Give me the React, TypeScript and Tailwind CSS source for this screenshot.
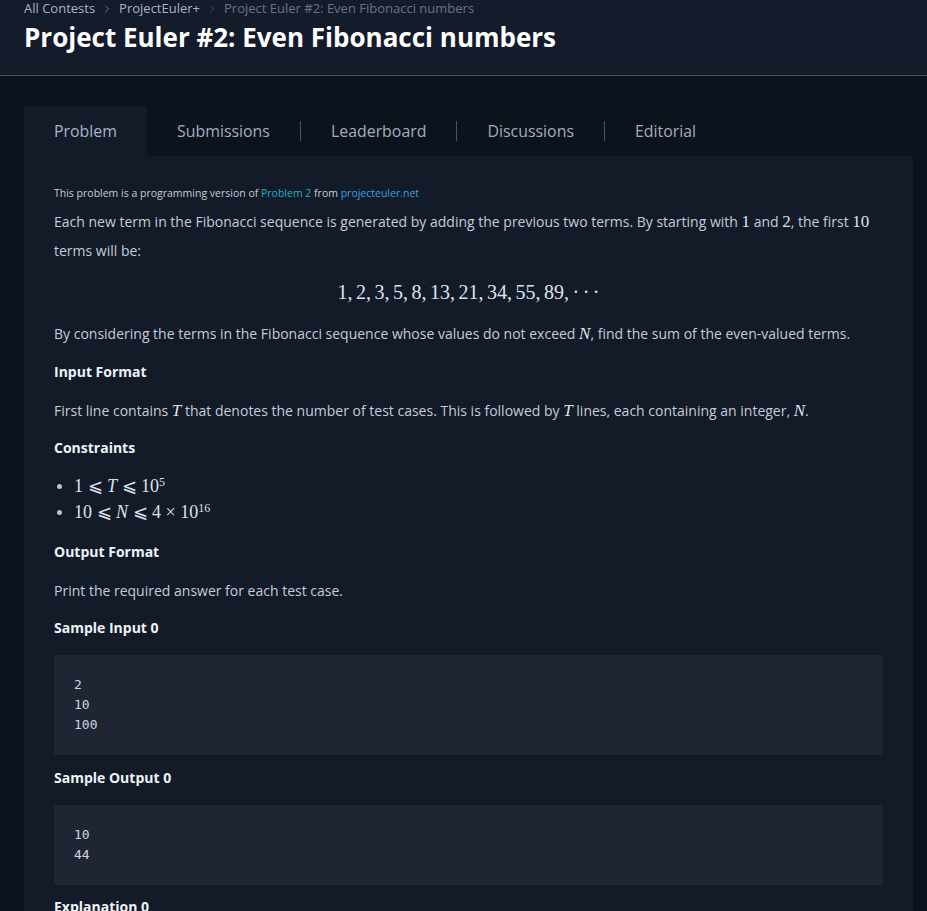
import React from "react";
import { ChevronRight } from "lucide-react";

const M = ({ children }: { children: React.ReactNode }) => (
  <span className="font-['Liberation_Serif',serif] text-[17px] text-[#dde3ec]">{children}</span>
);
const V = ({ children }: { children: React.ReactNode }) => (
  <span className="font-['Liberation_Serif',serif] italic text-[17px] text-[#dde3ec]">{children}</span>
);

const tabs = ["Problem", "Submissions", "Leaderboard", "Discussions", "Editorial"];

function Heading({ children }: { children: React.ReactNode }) {
  return <h3 className="text-[14px] font-bold text-[#eef2f7] leading-[20px]">{children}</h3>;
}

function CodeBlock({ lines }: { lines: string[] }) {
  return (
    <pre className="m-0 bg-[#1f2533] rounded-[2px] px-5 py-[20px] font-['DejaVu_Sans_Mono',monospace] text-[13px] leading-[20px] text-[#cdd5e0]">
      {lines.join("\n")}
    </pre>
  );
}

function Bullet() {
  return <span className="w-[5px] h-[5px] rounded-full bg-[#b9c2cf] ml-[3px]" />;
}

export default function App() {
  return (
    <div className="min-h-screen bg-[#0d131d] font-['Open_Sans',sans-serif] text-[#c5cdd8]">
      <header className="bg-[#141b2b] border-b border-[#4a5161] px-6 h-[76px]">
        <nav className="flex items-center gap-[6px] text-[13px] leading-[17px]">
          <span className="text-[#aab3c2]">All Contests</span>
          <ChevronRight size={12} strokeWidth={1.5} className="text-[#8a93a3]" />
          <span className="text-[#aab3c2]">ProjectEuler+</span>
          <ChevronRight size={12} strokeWidth={1.5} className="text-[#586070]" />
          <span className="text-[#6b7384]">Project Euler #2: Even Fibonacci numbers</span>
        </nav>
        <h1 className="text-[26px] font-bold text-white leading-[36px] mt-[2px]">
          Project Euler #2: Even Fibonacci numbers
        </h1>
      </header>

      <main className="ml-6 w-[889px] mt-[30px]">
        <div className="flex items-center h-[50px]">
          {tabs.map((t, i) => (
            <React.Fragment key={t}>
              {i > 1 && <span className="w-px h-[20px] bg-[#4b5263]" />}
              <div
                className={`px-[30px] h-full flex items-center text-[15.9px] pt-px ${
                  i === 0 ? "bg-[#131a28] text-[#a9b6ca]" : "text-[#a3adbd]"
                }`}
              >
                {t}
              </div>
            </React.Fragment>
          ))}
        </div>

        <section className="bg-[#131a28] px-[30px] pt-[29px] pb-10">
          <p className="text-[10.5px] leading-[16px] text-[#c5cdd8]">
            This problem is a programming version of{" "}
            <span className="text-[#1eb0c6]">Problem 2</span> from{" "}
            <span className="text-[#3aa0e0]">projecteuler.net</span>
          </p>
          <p className="text-[14px] leading-[29px] mt-[6px]">
            Each new term in the Fibonacci sequence is generated by adding the previous two terms. By starting with <M>1</M> and <M>2</M>, the first <M>10</M> terms will be:
          </p>
          <div className="text-center pt-[17px] pb-[12px] leading-[20px]">
            <span className="font-['Liberation_Serif',serif] text-[20px] text-[#dde3ec] [word-spacing:-1.5px]">
              1, 2, 3, 5, 8, 13, 21, 34, 55, 89, &middot; &middot; &middot;
            </span>
          </div>
          <p className="text-[14px] leading-[29px] mt-[4px]">
            By considering the terms in the Fibonacci sequence whose values do not exceed <V>N</V>, find the sum of the even-valued terms.
          </p>

          <div className="mt-[14px]"><Heading>Input Format</Heading></div>
          <p className="text-[14px] leading-[29px] mt-[14px]">
            First line contains <V>T</V> that denotes the number of test cases. This is followed by <V>T</V> lines, each containing an integer, <V>N</V>.
          </p>

          <div className="mt-[13px]"><Heading>Constraints</Heading></div>
          <ul className="mt-[16px] space-y-[2px]">
            <li className="flex items-center gap-[12px] h-[24px]">
              <Bullet />
              <span className="font-['Liberation_Serif',serif] text-[18px] text-[#dde3ec] leading-[24px]">
                1 &#x2A7D; <i>T</i> &#x2A7D; 10<sup className="text-[12px]">5</sup>
              </span>
            </li>
            <li className="flex items-center gap-[12px] h-[24px]">
              <Bullet />
              <span className="font-['Liberation_Serif',serif] text-[18px] text-[#dde3ec] leading-[24px]">
                10 &#x2A7D; <i>N</i> &#x2A7D; 4 &times; 10<sup className="text-[12px]">16</sup>
              </span>
            </li>
          </ul>

          <div className="mt-[18px]"><Heading>Output Format</Heading></div>
          <p className="text-[14px] leading-[29px] mt-[14px]">Print the required answer for each test case.</p>

          <div className="mt-[13px]"><Heading>Sample Input 0</Heading></div>
          <div className="mt-[17px]"><CodeBlock lines={["2", "10", "100"]} /></div>

          <div className="mt-[13px]"><Heading>Sample Output 0</Heading></div>
          <div className="mt-[17px]"><CodeBlock lines={["10", "44"]} /></div>

          <div className="mt-[12px]"><Heading>Explanation 0</Heading></div>
          <p className="text-[14px] leading-[29px] mt-[14px]">
            For <V>N</V> = <M>10</M>, we have <M>{"{2, 8}"}</M>, sum is <M>10</M>.
          </p>
        </section>
      </main>
    </div>
  );
}
